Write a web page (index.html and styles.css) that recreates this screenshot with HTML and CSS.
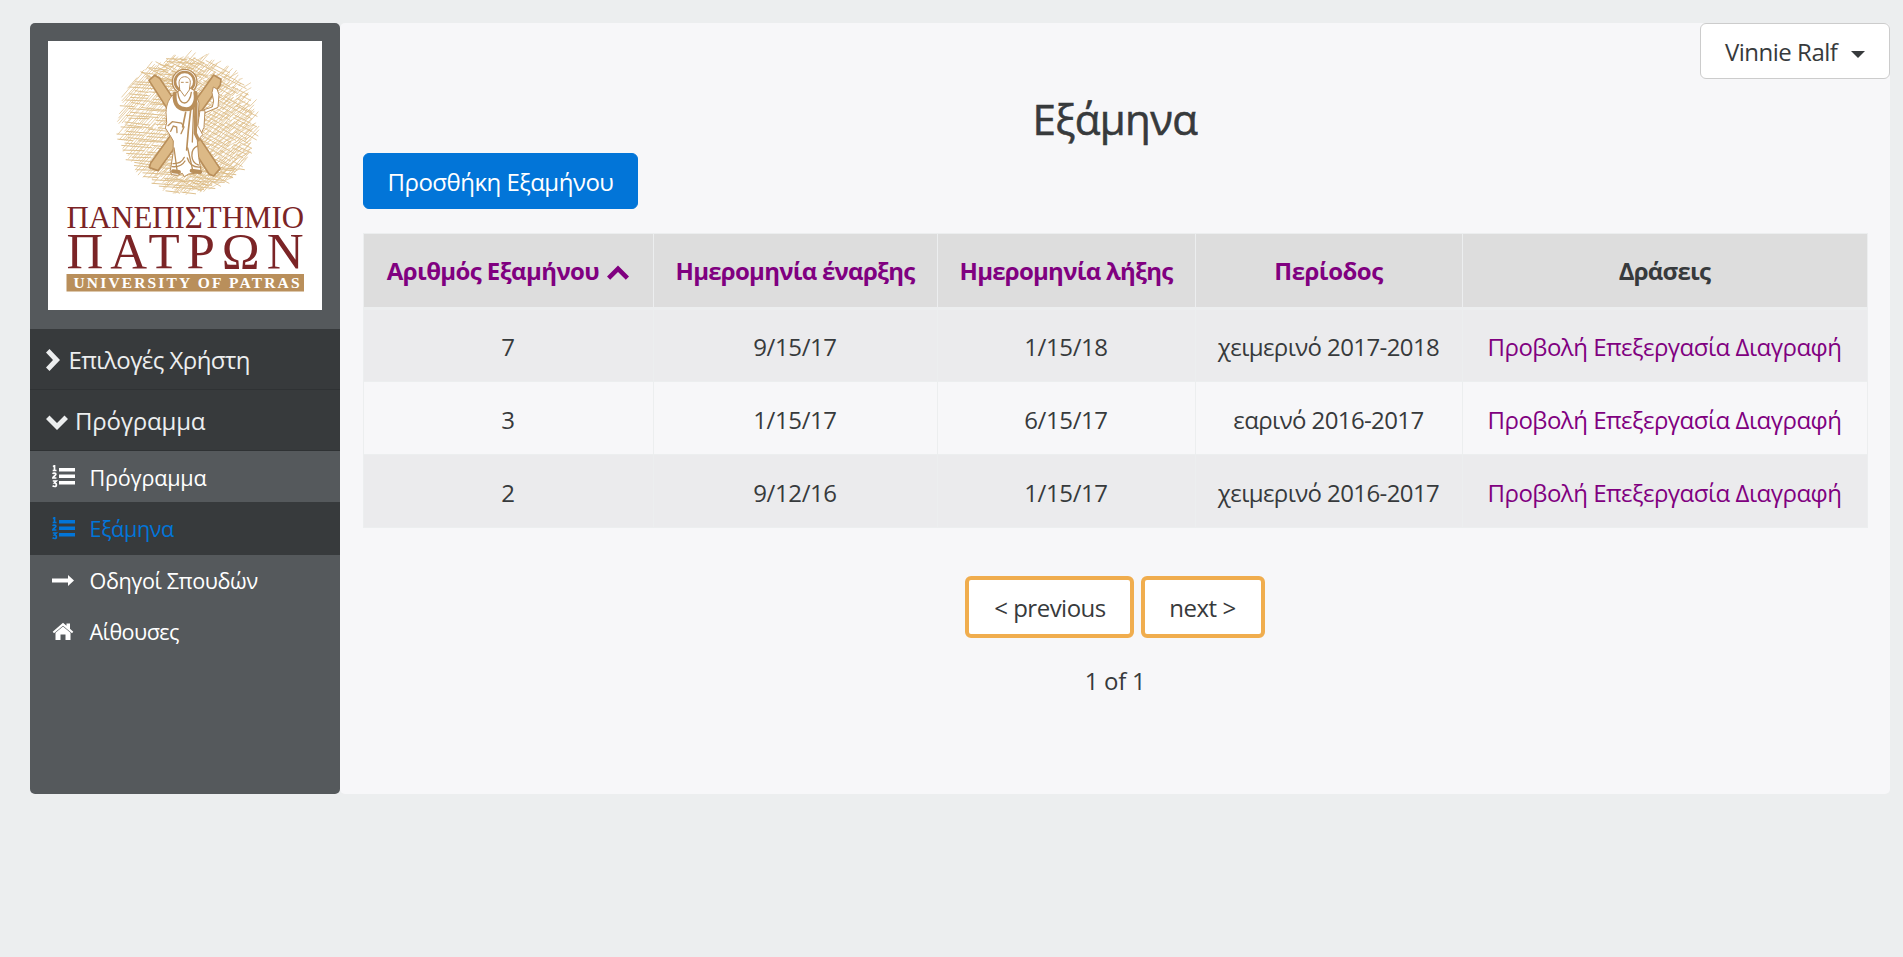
FILE: index.html
```
<!DOCTYPE html>
<html lang="el">
<head>
<meta charset="utf-8">
<title>Εξάμηνα</title>
<link rel="stylesheet" href="styles.css">
</head>
<body>
<div class="layout">
  <aside class="sidebar">
    <div class="brand">
      <svg class="logo" viewBox="48 41 274 269" role="img" aria-label="Πανεπιστήμιο Πατρών">
        <g transform="translate(105 48) scale(.3333)">
          <g id="hatch" fill="none"></g>
          <g fill="#dcb986" stroke="#b98f5b" stroke-width="5" stroke-linejoin="round">
            <path d="M132 97l17-15 15 9 181 271-19 22-14-6z"/>
            <path d="M326 81l22 13-2 17-187 257-26-9 4-14z"/>
          </g>
          <g stroke="#b98f5b" stroke-width="4" stroke-linejoin="round" stroke-linecap="round" fill="#fff">
            <circle cx="239" cy="101" r="37" stroke-width="4"/>
            <circle cx="239" cy="101" r="29" stroke-width="8"/>
            <path d="M282 190l40-13 4-18-5-25 4-17 11 6 6 17-3 38-57 24z" stroke-width="3"/>
            <path d="M286 188l14 0-3 50-11 24-10-8z" stroke-width="3"/>
            <path d="M210 136c-18 12-26 33-27 58l2 30-4 16 16 25 8 14-1 39-8 50 4 12 17 2 15-6 6 10 13-8 38-4-8-46-4-50 16-18-15-27 4-68-12-36-24-14z" stroke-width="3"/>
            <path d="M222 104c-1-24 35-24 34 0l-3 22-14 19-14-19z" stroke-width="3"/>
          </g>
          <g fill="none" stroke="#b98f5b" stroke-linecap="round">
            <path d="M209 137c-3 38 16 47 35 47 22 0 32-24 27-50" stroke-width="12"/>
            <path d="M218 131c3 26 13 34 21 34s18-12 20-32" stroke-width="4"/>
            <path d="M273 165l-2 91 9 19" stroke-width="10"/>
            <path d="M257 187l-7 60-5 59M242 193l-9 44" stroke-width="5"/>
            <path d="M266 180l-4 102M248 300l16 70M207 300l9 66M189 233l13-12 27 4 8 12-9 20M197 250l8-16 10 3 1 17" stroke-width="4"/>
            <path d="M204 347c17 1 28-6 34-19M201 356c20 2 32-5 39-17M278 294c-25 10-22 49 2 57M247 330c6 20 21 29 40 27" stroke-width="4"/>
            <path d="M204 370l18 2M260 368l26 4" stroke-width="12"/>
            <path d="M229 103h6M243 103h6" stroke-width="3"/>
          </g>
        </g>
        <g class="logo-name">
          <text x="66.500" y="228" font-size="31" textLength="237.500" lengthAdjust="spacingAndGlyphs">ΠΑΝΕΠΙΣΤΗΜΙΟ</text>
          <text x="66.500" y="268" font-size="51" textLength="237">ΠΑΤΡΩΝ</text>
        </g>
        <rect x="66.500" y="274" width="237.500" height="17.500" fill="#b98f5b"/>
        <text class="logo-sub" x="73.500" y="288" font-size="15.500" textLength="226">UNIVERSITY OF PATRAS</text>
      </svg>
    </div>
    <div class="group">
      <svg class="chev-r" viewBox="0 0 14 22"><path d="M0 3.500L3.500 0 14 11 3.500 22 0 18.500 7 11z"/></svg>
      <span class="tight">Επιλογές Χρήστη</span>
    </div>
    <div class="group">
      <svg class="chev-d" viewBox="0 0 22 14"><path d="M0 3.500L3.500 0 11 7.500 18.500 0 22 3.500 11 14.500z"/></svg>
      <span class="t1">Πρόγραμμα</span>
    </div>
    <nav class="menu">
      <a class="item first"><svg viewBox="0 0 23 23"><use href="#list"/></svg><span class="t1">Πρόγραμμα</span></a>
      <a class="item active"><svg viewBox="0 0 23 23"><use href="#list"/></svg><span>Εξάμηνα</span></a>
      <a class="item"><svg viewBox="0 0 23 23"><path d="M0 9.500h16V6l6 5.500-6 5.500v-3.500H0z"/></svg><span class="t2">Οδηγοί Σπουδών</span></a>
      <a class="item"><svg viewBox="0 0 23 23"><path d="M11 6.500l7.500 6.300V20h-5v-5.500h-5V20h-5v-7.200z"/><path d="M11 2.800l3.500 3V3.500H18v5.300l3.300 2.900-1.300 1.600-9-7.600-9 7.600L.7 11.700z"/></svg><span class="t3">Αίθουσες</span></a>
    </nav>
  </aside>

  <main class="content">
    <div class="topbar">
      <button class="btn user"><span>Vinnie Ralf</span><i class="caret"></i></button>
    </div>
    <h1 class="title">Εξάμηνα</h1>
    <div><button class="btn primary">Προσθήκη Εξαμήνου</button></div>
    <table class="grid">
      <colgroup><col class="c1"><col class="c2"><col class="c3"><col class="c4"><col class="c5"></colgroup>
      <thead>
        <tr>
          <th><a>Αριθμός Εξαμήνου</a><svg class="sort" viewBox="0 0 22 14"><path d="M0 11L11 0l11 11-3.200 3.200L11 6.500l-7.800 7.700z"/></svg></th>
          <th class="h2"><a>Ημερομηνία έναρξης</a></th>
          <th class="h2"><a>Ημερομηνία λήξης</a></th>
          <th class="h4"><a>Περίοδος</a></th>
          <th class="h2">Δράσεις</th>
        </tr>
      </thead>
      <tbody>
        <tr><td>7</td><td>9/15/17</td><td>1/15/18</td><td class="term">χειμερινό 2017-2018</td><td class="acts"><a>Προβολή</a> <a>Επεξεργασία</a> <a>Διαγραφή</a></td></tr>
        <tr><td>3</td><td>1/15/17</td><td>6/15/17</td><td class="term">εαρινό 2016-2017</td><td class="acts"><a>Προβολή</a> <a>Επεξεργασία</a> <a>Διαγραφή</a></td></tr>
        <tr><td>2</td><td>9/12/16</td><td>1/15/17</td><td class="term">χειμερινό 2016-2017</td><td class="acts"><a>Προβολή</a> <a>Επεξεργασία</a> <a>Διαγραφή</a></td></tr>
      </tbody>
    </table>
    <div class="pager">
      <button class="page prev">&lt; previous</button>
      <button class="page next">next &gt;</button>
    </div>
    <p class="count">1 of 1</p>
  </main>
</div>
<svg class="defs">
  <defs>
    <g id="list">
      <path d="M7 3h16v3.500H7zM7 9.500h16V13H7zM7 16h16v3.500H7z"/>
      <path fill="none" stroke="currentColor" stroke-width="1.700" d="M1 1.600l1.500-1V5.500M.7 5.500h3.800M.7 8.800c.6-1 3.200-.9 3.200.5C3.900 10.500 1 11.500.8 13h3.600M.8 16h3.400l-1.700 2c2.600 0 2.300 3.500.3 3.500-.9 0-1.700-.3-2.200-.8"/>
    </g>
  </defs>
</svg>
<script src="hatch.js"></script>
</body>
</html>
```

FILE: styles.css
```
* { box-sizing: border-box; }
body {
  margin: 0;
  background: #eceeef;
  color: #373a3c;
  font: 24px/36px "Open Sans", "Noto Sans", sans-serif;
}
.layout {
  display: flex;
  margin: 23px 13px 0 30px;
  height: 771px;
}
.sidebar {
  width: 310px;
  background: #55595c;
  border-radius: 5px;
  overflow: hidden;
}
.brand { height: 306px; padding: 18px; }
.logo { display: block; width: 274px; height: 269px; background: #fff; }
.logo-name { font-family: "Liberation Serif", serif; fill: #7b2426; }
.logo-sub { font-family: "Liberation Serif", serif; font-weight: 700; fill: #fff; }
.group {
  display: flex;
  align-items: center;
  height: 61px;
  padding: 1px 0 0 16px;
  background: #373a3c;
  border-bottom: 1px solid #2f3234;
  color: #eceeef;
}
.group span { padding-top: 1px; }
.group svg { fill: currentColor; }
.tight { letter-spacing: -.55px; }
.t1 { letter-spacing: -.2px; }
.chev-r { width: 14px; height: 22px; margin-right: 8.5px; }
.chev-d { width: 22px; height: 15px; margin: 3px 7px 0 0; }
.menu { font-size: 21.600px; color: #fff; }
.item { display: flex; align-items: center; height: 51px; padding-left: 22px; }
.item span { padding-top: 1px; }
.item.first span { padding-top: 3px; }
.item.active { height: 53px; background: #373a3c; color: #0275d8; letter-spacing: -.35px; }
.item svg { width: 23px; height: 23px; margin-right: 14.5px; fill: currentColor; }
.t2 { letter-spacing: -.4px; }
.t3 { letter-spacing: -.55px; }
.content {
  flex: 1;
  padding-left: 23px;
  background: #f7f7f9;
  border-radius: 5px;
}
.topbar { display: flex; justify-content: flex-end; }
.btn {
  height: 56px;
  border: 1px solid #0275d8;
  border-radius: 6px;
  font: inherit;
  letter-spacing: -.5px;
  white-space: nowrap;
}
.user {
  display: flex;
  align-items: center;
  width: 190px;
  padding: 2px 0 0 24px;
  background: #fff;
  border-color: #ccc;
  color: #373a3c;
  letter-spacing: -.5px;
}
.caret { margin: 4px 0 0 14px; border: 7px solid transparent; border-top-color: #373a3c; border-bottom: 0; }
.title {
  width: 1504px;
  margin: 17px 0 11px;
  font-size: 42px;
  font-weight: 500;
  line-height: 46px;
  letter-spacing: -.6px;
  text-align: center;
  -webkit-text-stroke: .6px currentColor;
}
.primary { display: block; width: 275px; padding: 2px 0 0; background: #0275d8; color: #fff; }
.grid {
  width: 1504px;
  margin-top: 24px;
  border-collapse: collapse;
  table-layout: fixed;
  text-align: center;
  letter-spacing: -.4px;
}
.c1 { width: 290px; }
.c2 { width: 284px; }
.c3 { width: 258px; }
.c4 { width: 267px; }
.c5 { width: 405px; }
.grid th, .grid td { border: 1px solid #eceeef; padding: 3px 1px 0 0; height: 73px; white-space: nowrap; }
.grid th { height: 75px; padding: 1px 1px 0 0; background: #ddd; border-bottom-width: 3px; letter-spacing: -.6px; }
.grid th.h2 { letter-spacing: -.75px; }
.grid th.h4 { letter-spacing: -.5px; }
.grid a { color: purple; }
.grid tbody tr:nth-child(odd) { background: #ebebed; }
.grid .term { letter-spacing: -.6px; }
.grid .acts { letter-spacing: -.5px; }
.sort { width: 22px; height: 15px; margin-left: 8px; fill: purple; }
.pager { display: flex; justify-content: center; gap: 7px; width: 1503px; margin-top: 48px; }
.page {
  height: 62px;
  padding: 2px 0 0;
  border: 4px solid #f0ad4e;
  border-radius: 6px;
  background: #fff;
  color: #373a3c;
  font: inherit;
  letter-spacing: -.5px;
}
.prev { width: 169px; padding-left: 2px; }
.next { width: 124px; }
.count { width: 1504px; margin: 25px 0 0; text-align: center; letter-spacing: -.3px; }
.defs { position: absolute; width: 0; height: 0; }
```

FILE: hatch.js
```
// Pencil hatching behind the figure, limited to a roughly round area.
const NS = 'http://www.w3.org/2000/svg';
let seed = 11;
const rnd = () => (seed = (seed * 16807) % 2147483647) / 2147483647;
const cx = 243, cy = 230, R = 211;
function strokes(angle, count, width, color, keep) {
  const c = Math.cos(angle), s = Math.sin(angle);
  let d = '';
  for (let i = 0; i < count; i++) {
    const off = (i / (count - 1) * 2 - 1) * R + (rnd() - .5) * 5;
    const half = Math.sqrt(Math.max(0, R * R - off * off)) - rnd() * 40;
    let a = -half, b;
    while (a < half) {
      b = Math.min(a + 40 + rnd() * 100, half + rnd() * 22);
      const x = cx + a * c - off * s, y = cy + a * s + off * c;
      const x2 = cx + b * c - off * s, y2 = cy + b * s + off * c + (rnd() - .5) * 8;
      if (keep((x + x2) / 2, (y + y2) / 2)) d += `M${x.toFixed(1)} ${y.toFixed(1)}L${x2.toFixed(1)} ${y2.toFixed(1)}`;
      a = b + rnd() * 22;
    }
  }
  const p = document.createElementNS(NS, 'path');
  p.setAttribute('d', d);
  p.setAttribute('stroke', color);
  p.setAttribute('stroke-width', width);
  document.getElementById('hatch').appendChild(p);
}
strokes(.08, 46, 2.6, '#d9b67c', (x, y) => x < 260 || y > 350);
strokes(-.85, 66, 2.3, '#dfc08c', () => true);
strokes(-.5, 46, 2, '#dfc08c', (x) => x > 190);
strokes(.5, 38, 2.3, '#d9b67c', (x, y) => x > 250 || y < 110);
```
